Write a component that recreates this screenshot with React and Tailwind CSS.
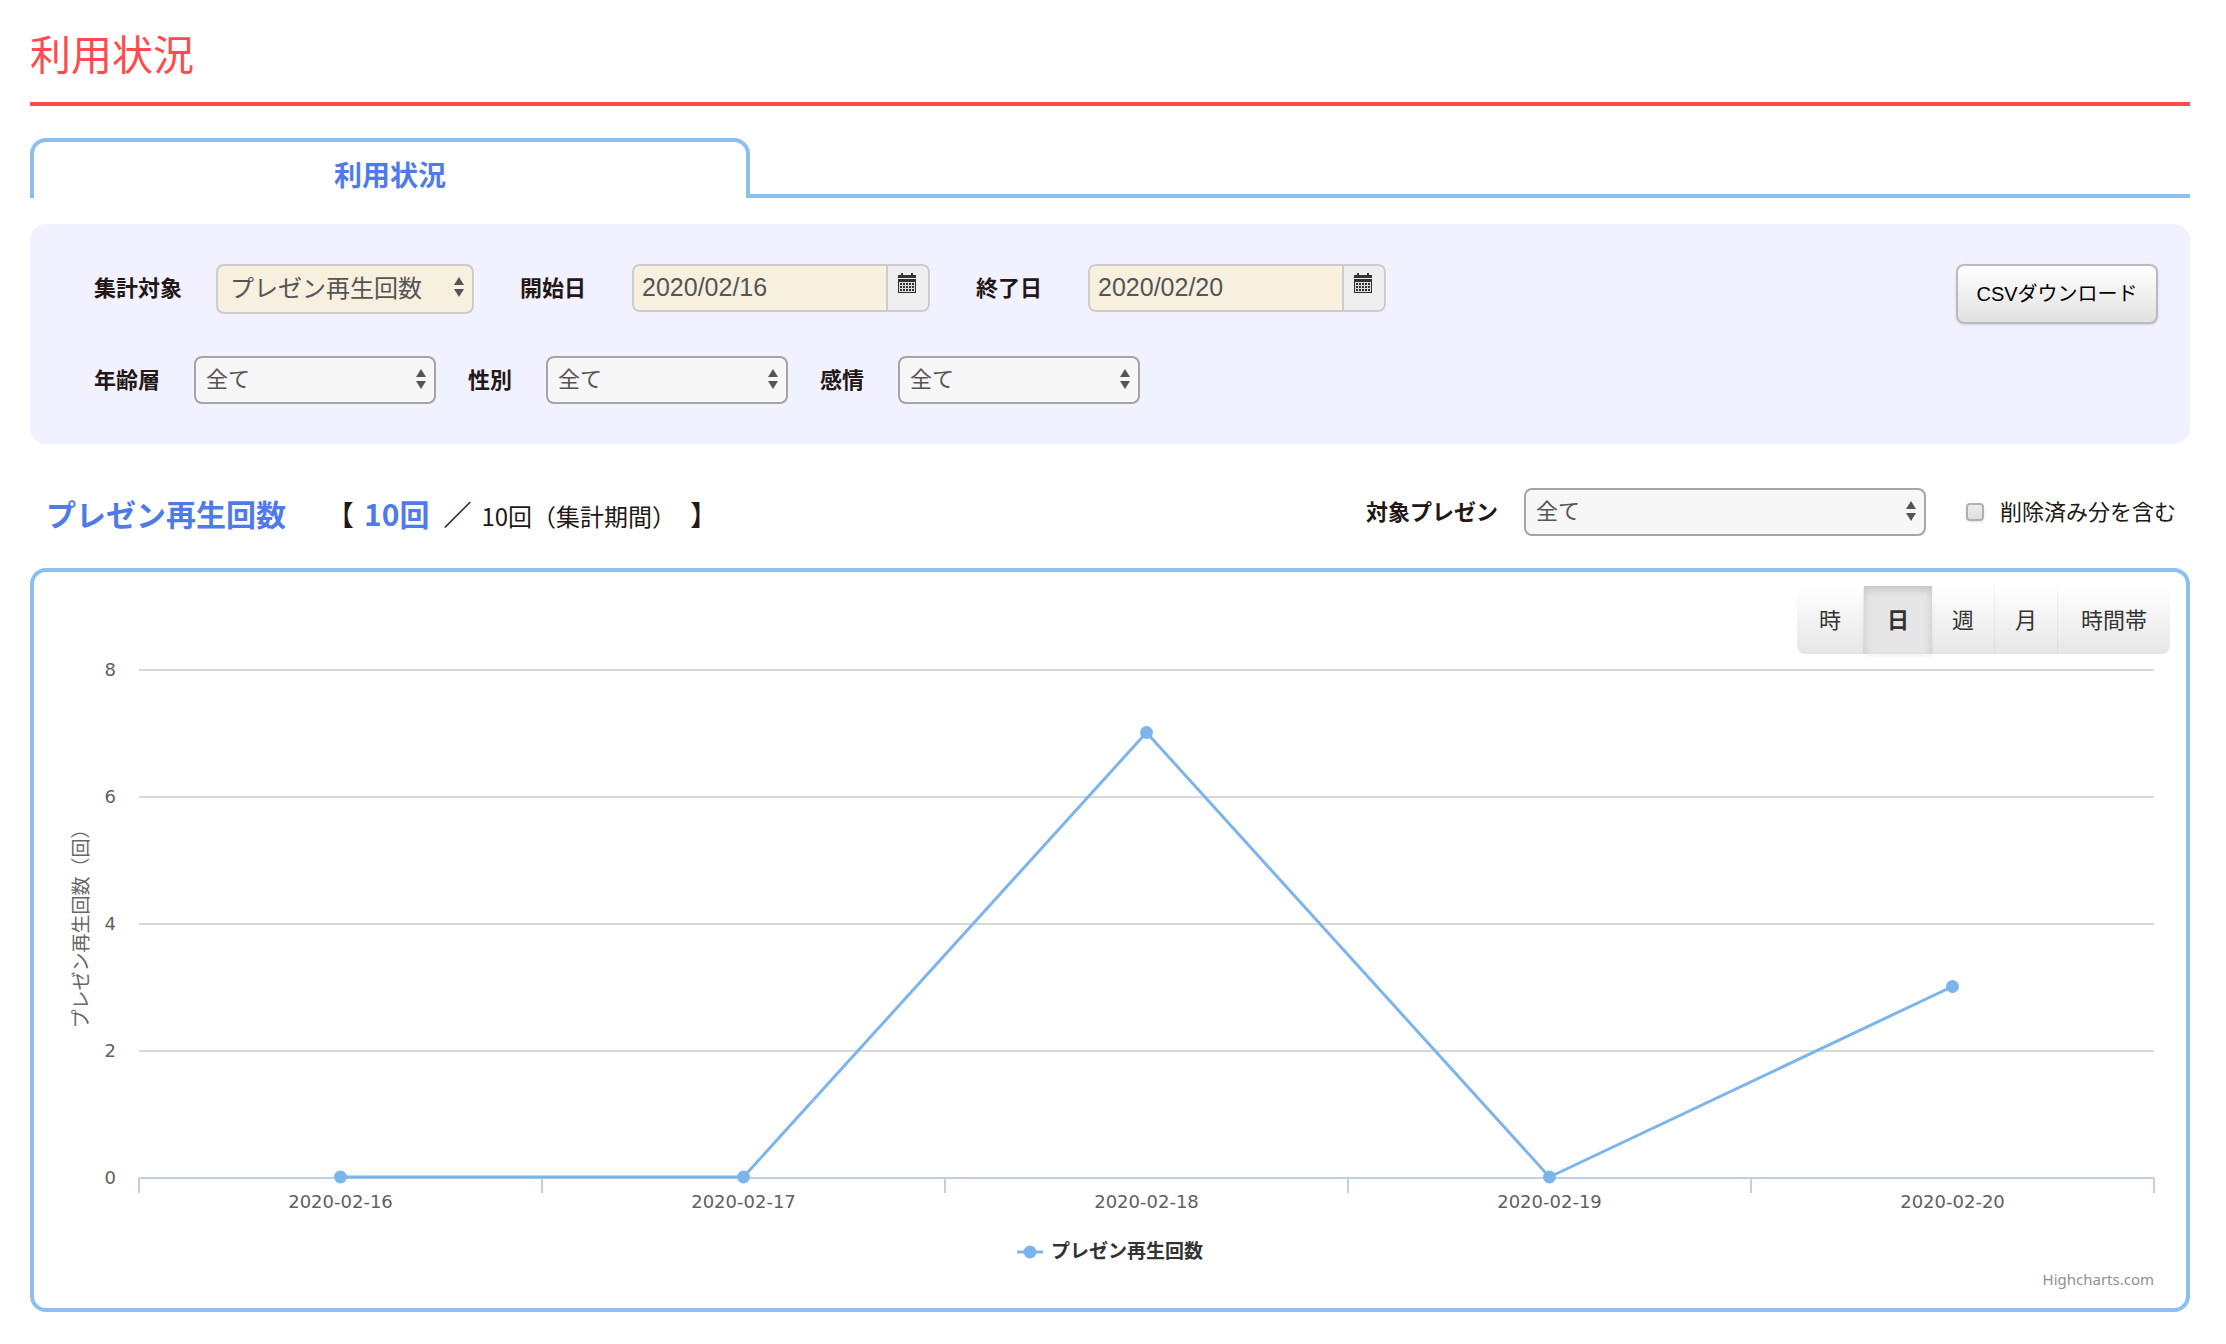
import React, { useState } from 'react';

const POINTS = [
  { date: '2020-02-16', value: 0 },
  { date: '2020-02-17', value: 0 },
  { date: '2020-02-18', value: 7 },
  { date: '2020-02-19', value: 0 },
  { date: '2020-02-20', value: 3 },
];
const LEVELS = [8, 6, 4, 2, 0];
const TOP = 16;
const BASE = 524;
const MAX = 8;

const yOf = (v) => BASE - (v / MAX) * (BASE - TOP);
const xOf = (i) => `${((i + 0.5) / POINTS.length) * 100}%`;

function Arrows() {
  return (
    <svg viewBox="0 0 10 20" className="pointer-events-none absolute right-[10px] top-[13px] h-5 w-[10px]" fill="#555" aria-hidden="true">
      <path d="M5 0 10 8H0ZM5 20 10 12H0Z" />
    </svg>
  );
}

function Select({ id, value, boxClass, selectClass }) {
  return (
    <span className={`relative block ${boxClass}`}>
      <select id={id} defaultValue={value} className={`block w-full appearance-none rounded-lg border-2 text-[#555] ${selectClass}`}>
        <option>{value}</option>
      </select>
      <Arrows />
    </span>
  );
}

const PLAIN = 'h-12 border-[#a5a5a5] bg-[#f7f7f7] pb-[2px] pl-[10px] text-[22px]';

function CalendarIcon() {
  return (
    <svg viewBox="0 0 18 20" className="h-5 w-[18px]" aria-hidden="true">
      <path fill="#333" d="M0 2h3V0h2v2h8V0h2v2h3v3H0ZM0 6h18v14H0Z" />
      <path stroke="#ddd" strokeWidth="1" d="M1.5 9.5h15M1.5 12.5h15M1.5 15.5h15M1.5 18.5h15M1.5 9v10M4.5 9v10M7.5 9v10M10.5 9v10M13.5 9v10M16.5 9v10" />
    </svg>
  );
}

function DateField({ id, value }) {
  return (
    <div className="flex h-12 w-[298px] overflow-hidden rounded-lg border-2 border-[#ccc]">
      <input id={id} type="text" defaultValue={value} className="min-w-0 flex-1 bg-[#f7f0df] px-2 text-[25px] text-[#555]" />
      <button type="button" aria-label="カレンダー" className="flex w-[42px] border-l-2 border-[#ccc] bg-[#eee] pl-[10px] pt-[7px]">
        <CalendarIcon />
      </button>
    </div>
  );
}

function Chart() {
  return (
    <div className="flex pr-8">
      <svg className="h-[566px] w-[105px] shrink-0 overflow-visible" fontFamily='"DejaVu Sans", "Noto Sans CJK JP", sans-serif'>
        <text transform="translate(54 270) rotate(-90)" textAnchor="middle" fontSize="19" fill="#666">プレゼン再生回数（回）</text>
        {LEVELS.map((v) => (
          <text key={v} x="82" y={yOf(v) + 6} textAnchor="end" fontSize="18" fill="#606060">{v}</text>
        ))}
      </svg>
      <svg className="h-[566px] min-w-0 flex-1 overflow-visible" fontFamily='"DejaVu Sans", sans-serif'>
        {LEVELS.slice(0, -1).map((v) => (
          <line key={v} x1="0" x2="100%" y1={yOf(v)} y2={yOf(v)} stroke="#d8d8d8" strokeWidth="2" />
        ))}
        <line x1="0" x2="100%" y1={BASE} y2={BASE} stroke="#c0d0e0" strokeWidth="2" />
        {[0, 1, 2, 3, 4, 5].map((i) => (
          <line key={i} x1={`${i * 20}%`} x2={`${i * 20}%`} y1={BASE} y2={BASE + 15} stroke="#c0d0e0" strokeWidth="2" />
        ))}
        {POINTS.slice(1).map((p, i) => (
          <line key={p.date} x1={xOf(i)} y1={yOf(POINTS[i].value) - 1} x2={xOf(i + 1)} y2={yOf(p.value) - 1} stroke="#7cb5ec" strokeWidth="3" strokeLinecap="round" />
        ))}
        {POINTS.map((p, i) => (
          <g key={p.date}>
            <circle cx={xOf(i)} cy={yOf(p.value) - 1} r="6.5" fill="#7cb5ec" />
            <text x={xOf(i)} y={BASE + 30} textAnchor="middle" fontSize="18" fill="#606060">{p.date}</text>
          </g>
        ))}
      </svg>
    </div>
  );
}

const UNITS = ['時', '日', '週', '月', '時間帯'];

export default function App() {
  const [unit, setUnit] = useState('日');
  return (
    <main className="bg-white pb-8 pl-[30px] pr-9 font-['Liberation_Sans','Noto_Sans_CJK_JP',sans-serif] text-[22px] text-[#231815]">
      <h1 className="h-[106px] border-b-4 border-[#ff4b4b] pt-[26px] text-[41px] leading-[60px] text-[#ff4b4b]">利用状況</h1>

      <div className="mt-8 flex h-[60px] items-end" role="tablist">
        <button type="button" role="tab" aria-selected="true" className="h-full w-1/3 rounded-t-2xl border-4 border-b-0 border-[#8cbfed] pt-[14px] text-[28px] font-bold leading-10 text-[#4f7be8]">
          利用状況
        </button>
        <div className="flex-1 border-b-4 border-[#8cbfed]" />
      </div>

      <section className="mt-[26px] flex h-[220px] items-start justify-between rounded-2xl bg-[#f2f1ff] pl-16 pr-8 pt-10">
        <div>
          <div className="flex h-12 items-center">
            <label htmlFor="target" className="mr-[34px] font-bold">集計対象</label>
            <Select id="target" value="プレゼン再生回数" boxClass="h-12 w-[258px]" selectClass="h-[50px] border-[#ccc] bg-[#f7f0df] pl-3 text-2xl" />
            <label htmlFor="from" className="mx-[46px] font-bold">開始日</label>
            <DateField id="from" value="2020/02/16" />
            <label htmlFor="to" className="mx-[46px] font-bold">終了日</label>
            <DateField id="to" value="2020/02/20" />
          </div>
          <div className="mt-11 flex h-12 items-center">
            <label htmlFor="age" className="mr-[34px] font-bold">年齢層</label>
            <Select id="age" value="全て" boxClass="w-[242px]" selectClass={PLAIN} />
            <label htmlFor="sex" className="ml-8 mr-[34px] font-bold">性別</label>
            <Select id="sex" value="全て" boxClass="w-[242px]" selectClass={PLAIN} />
            <label htmlFor="mood" className="ml-8 mr-[34px] font-bold">感情</label>
            <Select id="mood" value="全て" boxClass="w-[242px]" selectClass={PLAIN} />
          </div>
        </div>
        <button type="button" className="h-[60px] w-[202px] rounded-lg border-2 border-[#bbb] bg-linear-to-b from-white to-[#e1e1e1] text-xl text-black shadow-sm">
          CSVダウンロード
        </button>
      </section>

      <div className="mt-11 flex h-12 items-center pl-4 pr-[14px]">
        <div className="flex items-baseline pt-1">
          <h2 className="text-[30px] font-bold text-[#4f7be8]">プレゼン再生回数</h2>
          <p className="ml-10 flex items-baseline text-[28px]">
            <span>【</span>
            <b className="ml-[10px] font-['Noto_Sans_CJK_JP',sans-serif] text-[30px] text-[#4f7be8]">10回</b>
            <span className="ml-[14px] mr-[10px] font-bold">／</span>
            <span className="font-['Noto_Sans_CJK_JP',sans-serif] text-2xl">10回（集計期間）</span>
            <span className="ml-[14px]">】</span>
          </p>
        </div>
        <label htmlFor="presentation" className="ml-auto mr-[26px] font-bold">対象プレゼン</label>
        <Select id="presentation" value="全て" boxClass="w-[402px]" selectClass={PLAIN} />
        <label className="ml-10 flex items-center gap-4">
          <input type="checkbox" className="size-[18px] appearance-none rounded border-2 border-[#b0b0b0] bg-linear-to-b from-[#eee] to-[#ddd] shadow-sm" />
          削除済み分を含む
        </label>
      </div>

      <section className="mt-8 h-[744px] rounded-2xl border-4 border-[#8cbfed]">
        <div className="flex justify-end pr-4 pt-[14px]">
          <div className="flex h-[68px] rounded-lg bg-linear-to-b from-white to-[#e6e6e6] text-[#333]">
            {UNITS.map((u) => (
              <button
                key={u}
                type="button"
                aria-pressed={u === unit}
                onClick={() => setUnit(u)}
                className={
                  u === unit
                    ? 'bg-[#e6e6e6] px-[23px] font-bold shadow-[inset_0_4px_8px_rgba(0,0,0,0.15),0_2px_4px_rgba(0,0,0,0.05)]'
                    : 'border-r border-[#0000000a] px-5 first:px-[22px] last:border-r-0 last:px-[23px]'
                }
              >
                {u}
              </button>
            ))}
          </div>
        </div>
        <Chart />
        <div className="mt-4 flex items-center justify-center gap-2 text-[19px] font-bold leading-8 text-[#333]">
          <svg viewBox="0 0 26 14" className="h-[14px] w-[26px]" fill="#7cb5ec" aria-hidden="true">
            <rect y="5.5" width="26" height="3" />
            <circle cx="13" cy="7" r="6.5" />
          </svg>
          プレゼン再生回数
        </div>
        <div className="flex justify-end pr-8">
          <a href="https://www.highcharts.com" className="font-['Noto_Sans',sans-serif] text-[15px] text-[#909090]">Highcharts.com</a>
        </div>
      </section>
    </main>
  );
}
